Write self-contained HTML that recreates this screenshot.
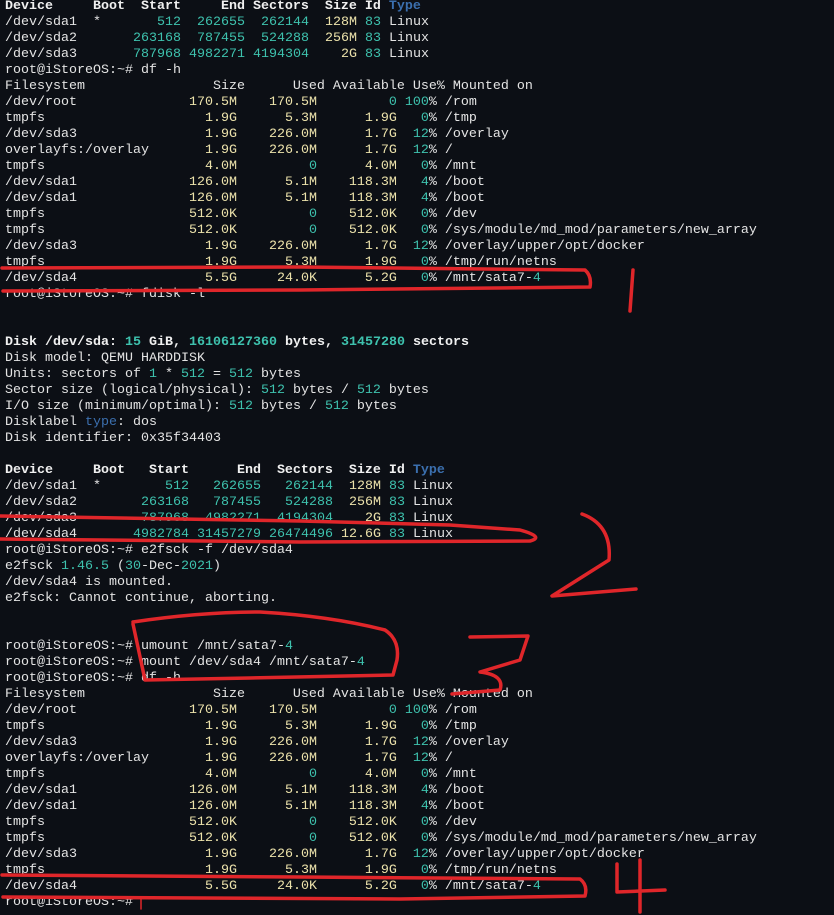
<!DOCTYPE html>
<html><head><meta charset="utf-8"><style>
html,body{margin:0;padding:0;background:#0c0f15;width:834px;height:915px;overflow:hidden}
pre{position:absolute;left:5px;top:-1px;margin:0;font-family:"Liberation Mono",monospace;font-size:13.33px;line-height:16px;color:#e4e4e4}
.t{color:#3ec2ae}.y{color:#ece2ab}.b{font-weight:bold;color:#f0f0f0}.bl{color:#3b6fae;font-weight:bold}.bu{color:#3b6fae}
svg{position:absolute;left:0;top:0}
</style></head><body>
<pre><span class="b">Device     Boot  Start     End Sectors  Size Id </span><span class="bl">Type</span>
/dev/sda1  *       <span class="t">512</span>  <span class="t">262655</span>  <span class="t">262144</span>  <span class="y">128M</span> <span class="t">83</span> Linux
/dev/sda2       <span class="t">263168</span>  <span class="t">787455</span>  <span class="t">524288</span>  <span class="y">256M</span> <span class="t">83</span> Linux
/dev/sda3       <span class="t">787968</span> <span class="t">4982271</span> <span class="t">4194304</span>    <span class="y">2G</span> <span class="t">83</span> Linux
root@iStoreOS:~# df -h
Filesystem                Size      Used Available Use% Mounted on
/dev/root           <span class="y">   170.5M</span> <span class="y">   170.5M</span>         <span class="t">0</span> <span class="t">100</span>% /rom
tmpfs               <span class="y">     1.9G</span> <span class="y">     5.3M</span> <span class="y">     1.9G</span>   <span class="t">0</span>% /tmp
/dev/sda3           <span class="y">     1.9G</span> <span class="y">   226.0M</span> <span class="y">     1.7G</span>  <span class="t">12</span>% /overlay
overlayfs:/overlay  <span class="y">     1.9G</span> <span class="y">   226.0M</span> <span class="y">     1.7G</span>  <span class="t">12</span>% /
tmpfs               <span class="y">     4.0M</span>         <span class="t">0</span> <span class="y">     4.0M</span>   <span class="t">0</span>% /mnt
/dev/sda1           <span class="y">   126.0M</span> <span class="y">     5.1M</span> <span class="y">   118.3M</span>   <span class="t">4</span>% /boot
/dev/sda1           <span class="y">   126.0M</span> <span class="y">     5.1M</span> <span class="y">   118.3M</span>   <span class="t">4</span>% /boot
tmpfs               <span class="y">   512.0K</span>         <span class="t">0</span> <span class="y">   512.0K</span>   <span class="t">0</span>% /dev
tmpfs               <span class="y">   512.0K</span>         <span class="t">0</span> <span class="y">   512.0K</span>   <span class="t">0</span>% /sys/module/md_mod/parameters/new_array
/dev/sda3           <span class="y">     1.9G</span> <span class="y">   226.0M</span> <span class="y">     1.7G</span>  <span class="t">12</span>% /overlay/upper/opt/docker
tmpfs               <span class="y">     1.9G</span> <span class="y">     5.3M</span> <span class="y">     1.9G</span>   <span class="t">0</span>% /tmp/run/netns
/dev/sda4           <span class="y">     5.5G</span> <span class="y">    24.0K</span> <span class="y">     5.2G</span>   <span class="t">0</span>% /mnt/sata7-<span class="t">4</span>
root@iStoreOS:~# fdisk -l


<span class="b">Disk /dev/sda: </span><span class="t b" style="color:#3ec2ae">15</span><span class="b"> GiB, </span><span class="t b" style="color:#3ec2ae">16106127360</span><span class="b"> bytes, </span><span class="t b" style="color:#3ec2ae">31457280</span><span class="b"> sectors</span>
Disk model: QEMU HARDDISK
Units: sectors of <span class="t">1</span> * <span class="t">512</span> = <span class="t">512</span> bytes
Sector size (logical/physical): <span class="t">512</span> bytes / <span class="t">512</span> bytes
I/O size (minimum/optimal): <span class="t">512</span> bytes / <span class="t">512</span> bytes
Disklabel <span class="bu">type</span>: dos
Disk identifier: 0x35f34403

<span class="b">Device     Boot   Start      End  Sectors  Size Id </span><span class="bl">Type</span>
/dev/sda1  *        <span class="t">512</span>   <span class="t">262655</span>   <span class="t">262144</span>  <span class="y">128M</span> <span class="t">83</span> Linux
/dev/sda2        <span class="t">263168</span>   <span class="t">787455</span>   <span class="t">524288</span>  <span class="y">256M</span> <span class="t">83</span> Linux
/dev/sda3        <span class="t">787968</span>  <span class="t">4982271</span>  <span class="t">4194304</span>    <span class="y">2G</span> <span class="t">83</span> Linux
/dev/sda4       <span class="t">4982784</span> <span class="t">31457279</span> <span class="t">26474496</span> <span class="y">12.6G</span> <span class="t">83</span> Linux
root@iStoreOS:~# e2fsck -f /dev/sda4
e2fsck <span class="t">1.46.5</span> (<span class="t">30</span>-Dec-<span class="t">2021</span>)
/dev/sda4 is mounted.
e2fsck: Cannot continue, aborting.


root@iStoreOS:~# umount /mnt/sata7-<span class="t">4</span>
root@iStoreOS:~# mount /dev/sda4 /mnt/sata7-<span class="t">4</span>
root@iStoreOS:~# df -h
Filesystem                Size      Used Available Use% Mounted on
/dev/root           <span class="y">   170.5M</span> <span class="y">   170.5M</span>         <span class="t">0</span> <span class="t">100</span>% /rom
tmpfs               <span class="y">     1.9G</span> <span class="y">     5.3M</span> <span class="y">     1.9G</span>   <span class="t">0</span>% /tmp
/dev/sda3           <span class="y">     1.9G</span> <span class="y">   226.0M</span> <span class="y">     1.7G</span>  <span class="t">12</span>% /overlay
overlayfs:/overlay  <span class="y">     1.9G</span> <span class="y">   226.0M</span> <span class="y">     1.7G</span>  <span class="t">12</span>% /
tmpfs               <span class="y">     4.0M</span>         <span class="t">0</span> <span class="y">     4.0M</span>   <span class="t">0</span>% /mnt
/dev/sda1           <span class="y">   126.0M</span> <span class="y">     5.1M</span> <span class="y">   118.3M</span>   <span class="t">4</span>% /boot
/dev/sda1           <span class="y">   126.0M</span> <span class="y">     5.1M</span> <span class="y">   118.3M</span>   <span class="t">4</span>% /boot
tmpfs               <span class="y">   512.0K</span>         <span class="t">0</span> <span class="y">   512.0K</span>   <span class="t">0</span>% /dev
tmpfs               <span class="y">   512.0K</span>         <span class="t">0</span> <span class="y">   512.0K</span>   <span class="t">0</span>% /sys/module/md_mod/parameters/new_array
/dev/sda3           <span class="y">     1.9G</span> <span class="y">   226.0M</span> <span class="y">     1.7G</span>  <span class="t">12</span>% /overlay/upper/opt/docker
tmpfs               <span class="y">     1.9G</span> <span class="y">     5.3M</span> <span class="y">     1.9G</span>   <span class="t">0</span>% /tmp/run/netns
/dev/sda4           <span class="y">     5.5G</span> <span class="y">    24.0K</span> <span class="y">     5.2G</span>   <span class="t">0</span>% /mnt/sata7-<span class="t">4</span>
root@iStoreOS:~# </pre>
<svg width="834" height="915" fill="none" stroke="#e0262a" stroke-width="3.5" stroke-linecap="round" stroke-linejoin="round">
<path d="M2 268 L300 267 L585 270 Q592 276 590 287 L300 290 L3 291"/>
<path d="M633 270 L630 311"/>
<path d="M0 516 L120 518 L300 521 L450 525 L520 530 Q545 537 530 541 L300 542 L0 539"/>
<path d="M582 514 Q612 525 609 560 L552 596 L636 589"/>
<path d="M133 622 Q200 612 260 612 Q330 616 385 630 Q400 640 397 660 L393 675 L250 678 L145 680 L133 624"/>
<path d="M470 637 L528 636 L520 660 L480 672 Q505 675 500 690 L452 694"/>
<path d="M2 875 L300 877 L580 879 Q588 885 585 896 L400 899 L200 898 L3 897"/>
<path d="M617 864 L617 892 L665 890"/>
<path d="M640 860 L640 912"/>
<path d="M141 897 L141 909" stroke-width="1.5"/>
</svg>
</body></html>
